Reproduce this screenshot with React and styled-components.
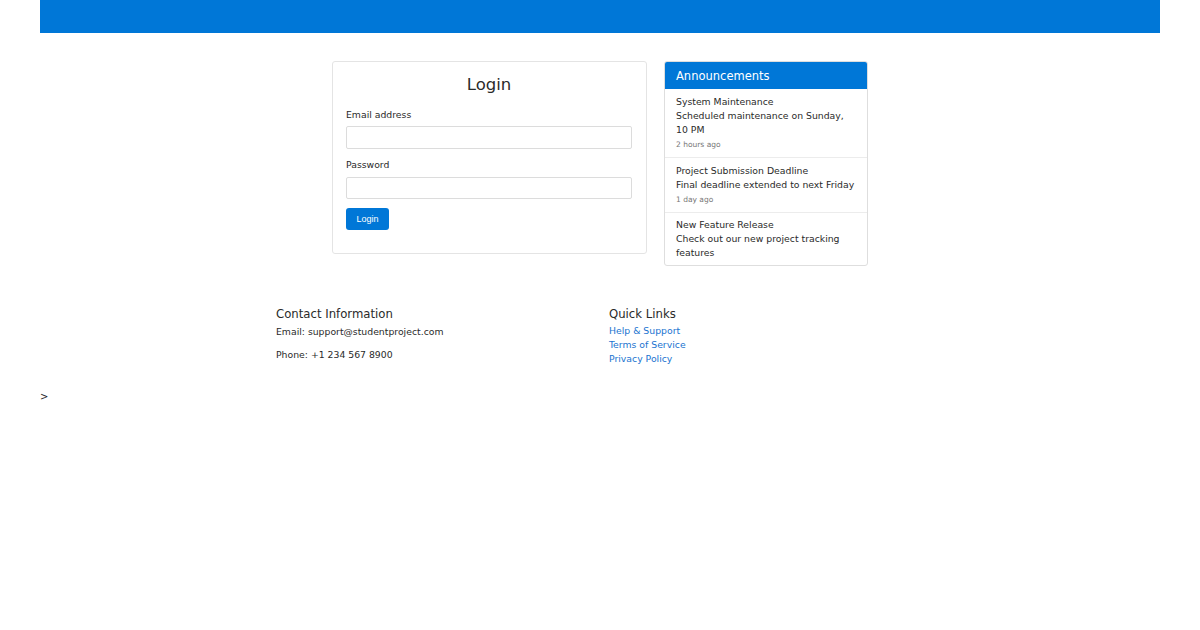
import React from 'react';
import styled, { createGlobalStyle } from 'styled-components';

const GlobalStyle = createGlobalStyle`
  body {
    margin: 0;
    font-family: "DejaVu Sans", "Noto Sans", sans-serif;
    color: #2a2a2a;
    background: #fff;
  }
`;

const Page = styled.div`
  padding: 0 40px;
`;

const TopBar = styled.header`
  height: 33px;
  background-color: #0077d7;
`;

const Main = styled.main`
  display: flex;
  justify-content: center;
  align-items: flex-start;
  gap: 17px;
  margin-top: 28px;
`;

const LoginCard = styled.section`
  box-sizing: border-box;
  width: 315px;
  padding: 12px 14px 23px 13px;
  border: 1px solid #e4e4e4;
  border-radius: 3px;
  h2 {
    margin: 0 0 12px;
    font-size: 16.5px;
    font-weight: 400;
    text-align: center;
    line-height: 22px;
  }
`;

const Field = styled.div`
  margin-bottom: ${p => p.$gap || 9}px;
  label {
    display: block;
    font-size: 9.3px;
    line-height: 14px;
    margin-bottom: ${p => p.$labelGap || 4}px;
  }
  input {
    box-sizing: border-box;
    width: 100%;
    height: ${p => p.$h || 23}px;
    border: 1px solid #dcdcdc;
    border-radius: 2px;
    padding: 0 6px;
    font-family: inherit;
  }
`;

const LoginButton = styled.button`
  width: 43px;
  height: 22px;
  border: none;
  border-radius: 3px;
  background-color: #0077d7;
  color: #fff;
  font-family: "Liberation Sans", Arial, sans-serif;
  font-size: 9px;
  padding: 0;
`;

const NewsCard = styled.aside`
  box-sizing: border-box;
  width: 204px;
  border: 1px solid #dedede;
  border-radius: 3px;
  overflow: hidden;
`;

const NewsHeader = styled.div`
  background-color: #0077d7;
  color: #fff;
  font-size: 11.5px;
  line-height: 14px;
  padding: 7px 11px 6px;
`;

const NewsItem = styled.div`
  padding: 6px 10px 7px 11px;
  font-size: 9.3px;
  line-height: 14px;
  & + & {
    border-top: 1px solid #ececec;
  }
  &:last-child {
    padding-top: 5px;
    padding-bottom: 5px;
  }
  small {
    display: block;
    font-size: 7.5px;
    line-height: 11px;
    color: #777;
    margin-top: 2px;
  }
`;

const Footer = styled.footer`
  width: 648px;
  margin: 40px auto 0;
  display: grid;
  grid-template-columns: 1fr 1fr;
  gap: 18px;
  h3 {
    margin: 0 0 3px;
    font-size: 11.7px;
    font-weight: 400;
    line-height: 16px;
  }
  p {
    margin: 0 0 9px;
    font-size: 9.3px;
    line-height: 14px;
  }
`;

const LinkList = styled.ul`
  list-style: none;
  margin: -1px 0 0;
  padding: 0;
  li {
    font-size: 9.3px;
    line-height: 14px;
  }
  a {
    color: #1a73d0;
    text-decoration: none;
  }
`;

const Stray = styled.div`
  margin-top: 19px;
  font-size: 10px;
  line-height: 14px;
`;

const news = [
  { title: 'System Maintenance', body: 'Scheduled maintenance on Sunday, 10 PM', time: '2 hours ago' },
  { title: 'Project Submission Deadline', body: 'Final deadline extended to next Friday', time: '1 day ago' },
  { title: 'New Feature Release', body: 'Check out our new project tracking features' },
];

const App = () => {
  return (
    <>
      <GlobalStyle />
      <Page>
        <TopBar />
        <Main>
          <LoginCard>
            <h2>Login</h2>
            <form>
              <Field>
                <label>Email address</label>
                <input type="email" />
              </Field>
              <Field $h={22} $labelGap={5} $gap={8}>
                <label>Password</label>
                <input type="password" />
              </Field>
              <LoginButton type="button">Login</LoginButton>
            </form>
          </LoginCard>
          <NewsCard>
            <NewsHeader>Announcements</NewsHeader>
            {news.map(n => (
              <NewsItem key={n.title}>
                <div>{n.title}</div>
                <div>{n.body}</div>
                {n.time && <small>{n.time}</small>}
              </NewsItem>
            ))}
          </NewsCard>
        </Main>
        <Footer>
          <div>
            <h3>Contact Information</h3>
            <p>Email: support@studentproject.com</p>
            <p>Phone: +1 234 567 8900</p>
          </div>
          <div>
            <h3>Quick Links</h3>
            <LinkList>
              <li><a href="#">Help &amp; Support</a></li>
              <li><a href="#">Terms of Service</a></li>
              <li><a href="#">Privacy Policy</a></li>
            </LinkList>
          </div>
        </Footer>
        <Stray>&gt;</Stray>
      </Page>
    </>
  );
};

export default App;
